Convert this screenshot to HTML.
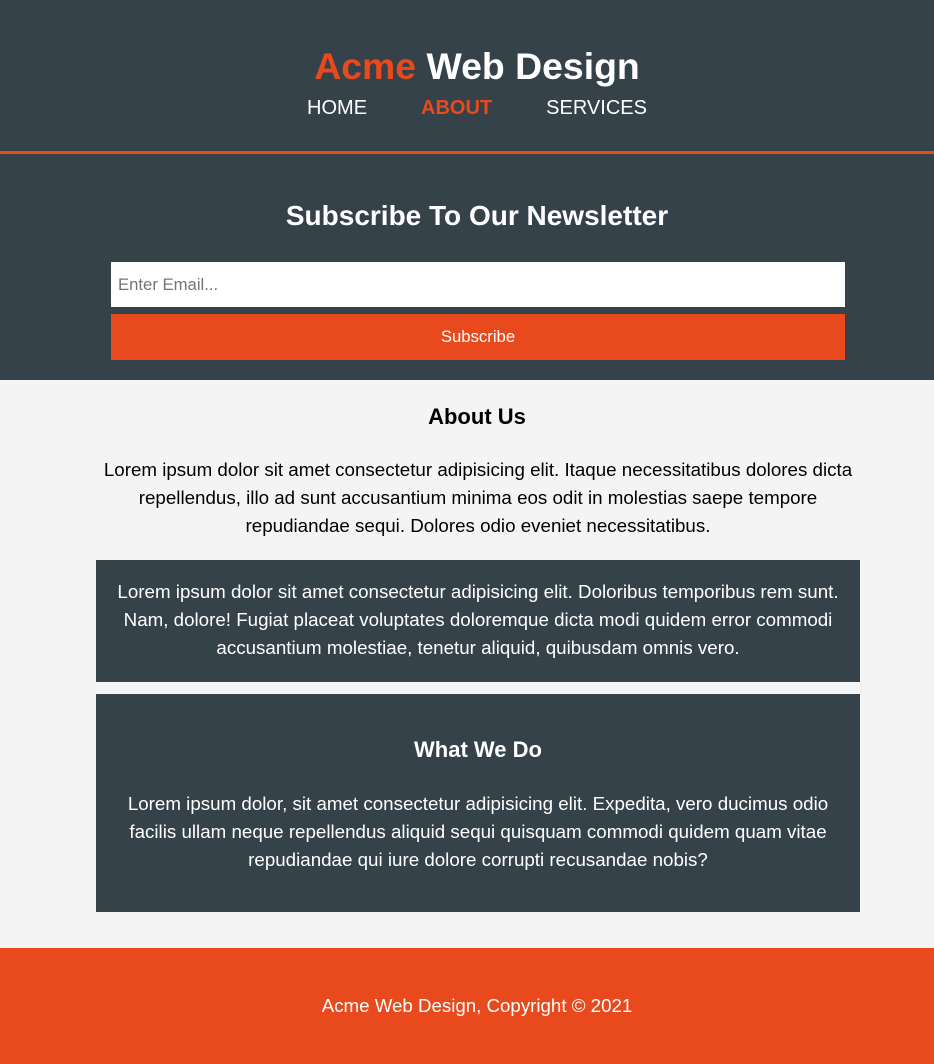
<!DOCTYPE html>
<html><head><meta charset="utf-8"><style>
*{margin:0;padding:0;box-sizing:border-box}
body{width:934px;height:1064px;font-family:"Liberation Sans",Arial,sans-serif;background:#f4f4f4;position:relative;overflow:hidden}
.abs{position:absolute;left:0;width:934px;text-align:center}
.sh{left:10px}
#hdr{position:absolute;top:0;left:0;width:934px;height:380px;background:#35424a}
#line{position:absolute;top:151px;left:0;width:934px;height:3px;background:#e8491d}
h1{font-size:37.4px;font-weight:bold;color:#fff;line-height:44px}
h1 span{color:#e8491d}
.nav{font-size:20px;color:#fff;line-height:24px}
.nav span{margin:0 27px}
.nav .cur{color:#e8491d;font-weight:bold}
#input{position:absolute;left:111px;top:262px;width:734px;height:45px;background:#fff;color:#757575;font-size:16.7px;line-height:45px;padding-left:7px}
#btn{position:absolute;left:111px;top:314px;width:734px;height:46px;background:#e8491d;color:#fff;font-size:16.7px;line-height:46px;text-align:center}
p{font-size:18.75px;line-height:28px}
.box{position:absolute;left:96px;width:764px;background:#35424a;color:#fff;text-align:center}
#foot{position:absolute;top:948px;left:0;width:934px;height:116px;background:#e8491d;color:#fff;font-size:18.7px;text-align:center;line-height:116px;padding-left:20px}
</style></head><body>
<div id="hdr"></div><div id="line"></div>
<div class="abs sh" style="top:44px"><h1><span>Acme</span> Web Design</h1></div>
<div class="abs nav sh" style="top:96px"><span>HOME</span><span class="cur">ABOUT</span><span>SERVICES</span></div>
<div class="abs sh" style="top:199px;color:#fff;font-size:28px;font-weight:bold;line-height:34px">Subscribe To Our Newsletter</div>
<div id="input">Enter Email...</div>
<div id="btn">Subscribe</div>
<div class="abs sh" style="top:404px;font-size:22px;font-weight:bold;line-height:26px;color:#000">About Us</div>
<div class="abs" style="top:456px;left:96px;width:764px"><p>Lorem ipsum dolor sit amet consectetur adipisicing elit. Itaque necessitatibus dolores dicta repellendus, illo ad sunt accusantium minima eos odit in molestias saepe tempore repudiandae sequi. Dolores odio eveniet necessitatibus.</p></div>
<div class="box" style="top:560px;height:122px;padding:18px 18px 0"><p>Lorem ipsum dolor sit amet consectetur adipisicing elit. Doloribus temporibus rem sunt. Nam, dolore! Fugiat placeat voluptates doloremque dicta modi quidem error commodi accusantium molestiae, tenetur aliquid, quibusdam omnis vero.</p></div>
<div class="box" style="top:694px;height:218px;padding:43px 18px 0">
<div style="font-size:22px;font-weight:bold;line-height:26px">What We Do</div>
<p style="margin-top:27px">Lorem ipsum dolor, sit amet consectetur adipisicing elit. Expedita, vero ducimus odio facilis ullam neque repellendus aliquid sequi quisquam commodi quidem quam vitae repudiandae qui iure dolore corrupti recusandae nobis?</p></div>
<div id="foot">Acme Web Design, Copyright © 2021</div>
</body></html>
